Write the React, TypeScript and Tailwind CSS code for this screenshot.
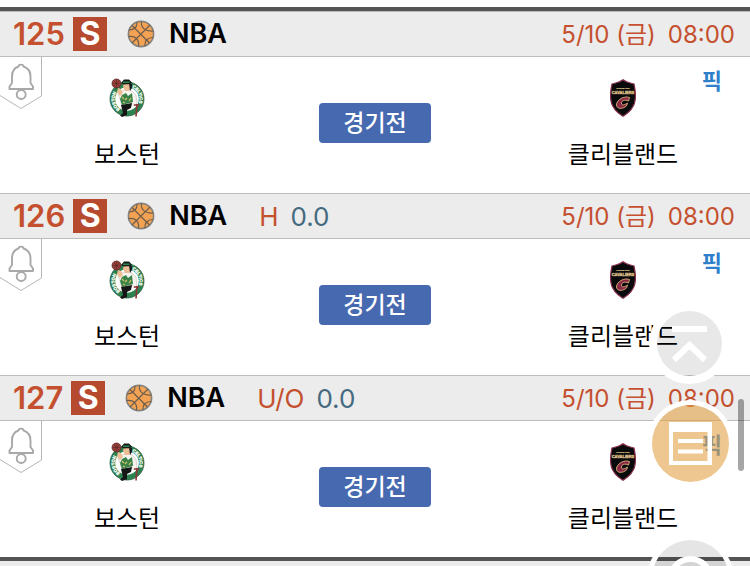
import type { ReactNode } from "react";

type Game = {
  no: number;
  market?: string;
  line?: string;
};

const GAMES: Game[] = [
  { no: 125 },
  { no: 126, market: "H", line: "0.0" },
  { no: 127, market: "U/O", line: "0.0" },
];

function Basketball() {
  return (
    <svg viewBox="0 0 28 28" className="size-7" fill="none" aria-hidden="true">
      <circle cx="14" cy="14" r="12.6" fill="#f2a252" stroke="#85827e" strokeWidth="1.6" />
      <g stroke="#6b5c4e" strokeWidth="1.1">
        <path d="M5 5.500 22.500 23M23 5 5 23" />
        <path d="M14.500 1.500c-1 6 4 10.500 12 9.500" />
        <path d="M1.500 16.500c7-1 11 3 10 10" />
        <path d="M2 10c3 0 5-1 6.500-2.500S10 4 10 2" />
        <path d="M26 17.500c-3 0-5 1-6.500 2.500S18 24 18 26" />
      </g>
    </svg>
  );
}

function Celtics() {
  return (
    <svg viewBox="0 0 38 40" className="h-10 w-[38px]" role="img" aria-label="보스턴">
      <defs>
        <path id="celtics-left" d="M12 31.200A12.400 12.400 0 0 1 10 12.500" />
        <path id="celtics-right" d="M24 9.600A12.400 12.400 0 0 1 29 28.400" />
      </defs>
      <circle cx="19" cy="21" r="17" fill="#2c8350" stroke="#2c5c42" strokeWidth=".8" />
      <circle cx="19" cy="21" r="11.800" fill="#fff" />
      <g fill="#fff" fontFamily="Liberation Sans, sans-serif" fontWeight="700" fontSize="4.4" stroke="#fff" strokeWidth=".3">
        <text>
          <textPath href="#celtics-left">BOSTON</textPath>
        </text>
        <text>
          <textPath href="#celtics-right">CELTICS</textPath>
        </text>
      </g>
      <path d="M14 13l5-2 5 2 4 4 1 9-3 2-3-4v4H14l-2-7-2-5z" fill="#f7f4f0" stroke="#b9aea2" strokeWidth=".5" />
      <path d="M14 17l4-2 2 3 4-3 1 9-11 3-2-6z" fill="#398348" />
      <path d="M14 19l2 2m1 1 2-2m2 3 2-3m-8 4 2 1" stroke="#d7c26d" strokeWidth="1.200" />
      <path d="M13 27l11-2-1 5-4 2v5l-5 2-2-1.500 3-2.500z" fill="#151616" />
      <path d="M16 5l6-1 1 5-2 4-4 0-2-4z" fill="#edbd96" />
      <path d="M13 5l3-3.500h5l3 3-2 1.500-6 .5zM21 5l3 1v4l-2 3z" fill="#171b19" />
      <path d="M15 3.500h7l-1 1.500h-6z" fill="#2c8350" />
      <path d="M10 10l-1 4 3 4 3-3-2-4z" fill="#edbd96" />
      <circle cx="8.500" cy="5.500" r="4.500" fill="#9a403b" stroke="#5d2a28" strokeWidth=".8" />
      <path d="M4.500 5.500h8M8.500 1.500v8M5.500 2.500l6 6M5.500 8.500l6-6" stroke="#5d2a28" strokeWidth=".6" />
      <path d="M26 27h5M29 26l-1 12.500" stroke="#8e3538" strokeWidth="1.600" />
    </svg>
  );
}

function Cavaliers() {
  return (
    <svg viewBox="0 0 26 38" className="h-[38px] w-[26px]" role="img" aria-label="클리블랜드">
      <path d="M13 .7C10 3 6 4 2 5 0 14 0 24 4 29c2 4 6 6 9 8.300 3-2.300 7-4.300 9-8.300 4-5 4-15 2-24-4-1-8-2-11-4.300z" fill="#090a0b" stroke="#87304e" strokeWidth="1.200" />
      <g fill="#d9bc86" stroke="#d9bc86" fontFamily="Liberation Sans, sans-serif" fontWeight="700" textAnchor="middle">
        <text x="13" y="9.500" fontSize="2.200" strokeWidth=".2">CLEVELAND</text>
        <text x="13" y="14.500" fontSize="4" strokeWidth=".4">CAVALIERS</text>
      </g>
      <path d="M18.500 22l1-3.500c-5-2-13 2-13 7.500 0 4 6 4.500 10 1l1-3c-3 2-6 3-6 0 0-2 3-4 7-2z" fill="#8a2745" stroke="#d7b47c" strokeWidth=".9" />
    </svg>
  );
}

function Bell() {
  return (
    <svg viewBox="0 0 43 54" className="h-[54px] w-[43px]" fill="none" aria-hidden="true">
      <path d="M41.500 0v39L21 51.500 0 38.500" stroke="#b5b5b5" />
      <g stroke="#a8a8a8" strokeWidth="1.900" strokeLinejoin="round">
        <path d="M18.500 9.500c0-2.500 5-2.500 5 0 4.500 1.500 7 5 7 10v6.500l2.500 3.500v2.500H9.500v-2.500l2.500-3.500v-6.500c0-5 2-8.500 6.500-10z" />
        <circle cx="21.200" cy="37.500" r="4.500" />
      </g>
    </svg>
  );
}

function Team({ name, children }: { name: string; children: ReactNode }) {
  return (
    <div className="flex w-[254px] flex-col items-center pt-[21px]">
      <div className="flex h-10 items-center">{children}</div>
      <span className="mt-[19px] text-2xl leading-9 text-black">{name}</span>
    </div>
  );
}

function GameRow({ game }: { game: Game }) {
  return (
    <article>
      <header className="flex h-[46px] items-center justify-between border-y border-[#bcbcbc] bg-[#ececec] pr-[15px] pl-[13px]">
        <div className="flex items-center">
          <span className="text-[31px] leading-9 font-semibold text-[#c4502f]">{game.no}</span>
          <span className="ml-2 flex size-[34px] items-center justify-center bg-[#b64a2e] text-[32px] font-bold text-white">S</span>
          <span className="ml-5">
            <Basketball />
          </span>
          <span className="ml-[14px] text-[27px] font-semibold text-black">NBA</span>
          {game.market && (
            <span className="ml-8 flex gap-3 text-[26px]">
              <span className="text-[#c4502f]">{game.market}</span>
              <span className="text-[#456a80]">{game.line}</span>
            </span>
          )}
        </div>
        <time className="flex gap-3 pt-px text-2xl text-[#c4502f]">
          <span>5/10 (금)</span>
          <span>08:00</span>
        </time>
      </header>
      <div className="relative flex h-[136px] justify-between">
        <button type="button" aria-label="알림" className="absolute top-0 left-0">
          <Bell />
        </button>
        <Team name="보스턴">
          <Celtics />
        </Team>
        <button type="button" className="mt-[46px] h-10 w-28 rounded bg-[#4669b0] text-[23px] font-medium text-white">
          경기전
        </button>
        <Team name="클리블랜드">
          <Cavaliers />
        </Team>
        <a href="#pick" className="absolute top-2 right-7 text-[22px] leading-8 font-bold text-[#2f7fcb]">
          픽
        </a>
      </div>
    </article>
  );
}

export default function App() {
  return (
    <div className="flex min-h-screen flex-col bg-white pt-[7px] font-['Inter','Noto_Sans_CJK_KR',sans-serif]">
      <main className="border-y-4 border-[#555]">
        {GAMES.map((game) => (
          <GameRow key={game.no} game={game} />
        ))}
      </main>
      <div className="grow bg-[#ececec]" />

      <button type="button" aria-label="맨 위로" className="fixed top-[311px] right-7 size-[65px] rounded-full bg-black/9 ring-8 ring-white">
        <svg viewBox="0 0 65 65" fill="none" stroke="#fff" strokeWidth="6" aria-hidden="true">
          <path d="M15 18h35M17 49l15.500-15L48 49" />
        </svg>
      </button>
      <button type="button" aria-label="목록" className="fixed top-[405px] right-[21px] size-[77px] rounded-full bg-[#e3a044]/60 ring-5 ring-white">
        <svg viewBox="0 0 77 77" fill="#fff" aria-hidden="true">
          <path fillRule="evenodd" d="M17 17h43v43H17zM21 27v29h34.500V27z" />
          <path d="M26 34h25v4H26zM26 44.500h25v4H26z" />
        </svg>
      </button>
      <button type="button" aria-label="검색" className="fixed -bottom-[51px] right-[21px] size-[77px] rounded-full bg-black/10 ring-5 ring-white">
        <svg viewBox="0 0 77 77" fill="none" stroke="#fff" strokeWidth="6" aria-hidden="true">
          <circle cx="38.500" cy="39" r="20" />
        </svg>
      </button>
      <div className="fixed top-[399px] right-[6px] h-[72px] w-[6px] rounded-full bg-black/35" />
    </div>
  );
}
